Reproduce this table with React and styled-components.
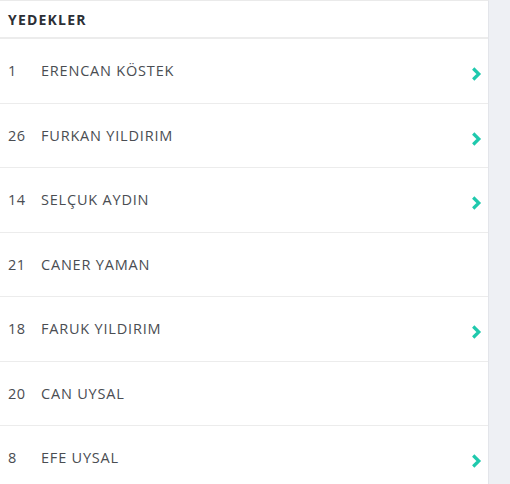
import styled, { createGlobalStyle } from "styled-components";

const GlobalStyle = createGlobalStyle`
  html, body {
    margin: 0;
    padding: 0;
    background: #eef0f4;
  }
  body {
    font-family: "Open Sans", "DejaVu Sans", sans-serif;
  }
`;

const Page = styled.div`
  display: flex;
  width: 510px;
  height: 484px;
  overflow: hidden;
`;

const Panel = styled.div`
  width: 489px;
  background: #fff;
  border-right: 1px solid #e3e5ea;
  border-top: 1px solid #eaeaea;
  box-sizing: border-box;
`;

const Header = styled.div`
  height: 36px;
  display: flex;
  align-items: center;
  padding-left: 8px;
  font-size: 14px;
  font-weight: 700;
  color: #2c2f36;
  letter-spacing: 1.2px;
  border-bottom: 2px solid #ececec;
`;

const Row = styled.div`
  height: 64.5px;
  display: flex;
  align-items: center;
  box-sizing: border-box;
  border-bottom: 1.5px solid #ececec;
  color: #4a4d52;
  font-size: 14.5px;
  letter-spacing: 0.8px;
`;

const Number = styled.span`
  width: 33px;
  padding-left: 8px;
  flex-shrink: 0;
  letter-spacing: 0.4px;
`;

const Name = styled.span`
  flex: 1;
`;

const Arrow = styled.span`
  width: 14px;
  margin-right: 3px;
  margin-top: 7px;
  display: flex;
`;

const players = [
  { no: 1, name: "ERENCAN KÖSTEK", arrow: true },
  { no: 26, name: "FURKAN YILDIRIM", arrow: true },
  { no: 14, name: "SELÇUK AYDIN", arrow: true },
  { no: 21, name: "CANER YAMAN", arrow: false },
  { no: 18, name: "FARUK YILDIRIM", arrow: true },
  { no: 20, name: "CAN UYSAL", arrow: false },
  { no: 8, name: "EFE UYSAL", arrow: true },
];

function Chevron() {
  return (
    <svg width="11" height="14" viewBox="0 0 11 14">
      <path
        d="M2.2 1.5 L7.8 7 L2.2 12.5"
        fill="none"
        stroke="#1fc9ad"
        strokeWidth="3.2"
        strokeLinejoin="miter"
      />
    </svg>
  );
}

export default function App() {
  return (
    <>
      <GlobalStyle />
      <Page>
        <Panel>
          <Header>YEDEKLER</Header>
          {players.map((p) => (
            <Row key={p.no}>
              <Number>{p.no}</Number>
              <Name>{p.name}</Name>
              <Arrow>{p.arrow && <Chevron />}</Arrow>
            </Row>
          ))}
        </Panel>
      </Page>
    </>
  );
}
